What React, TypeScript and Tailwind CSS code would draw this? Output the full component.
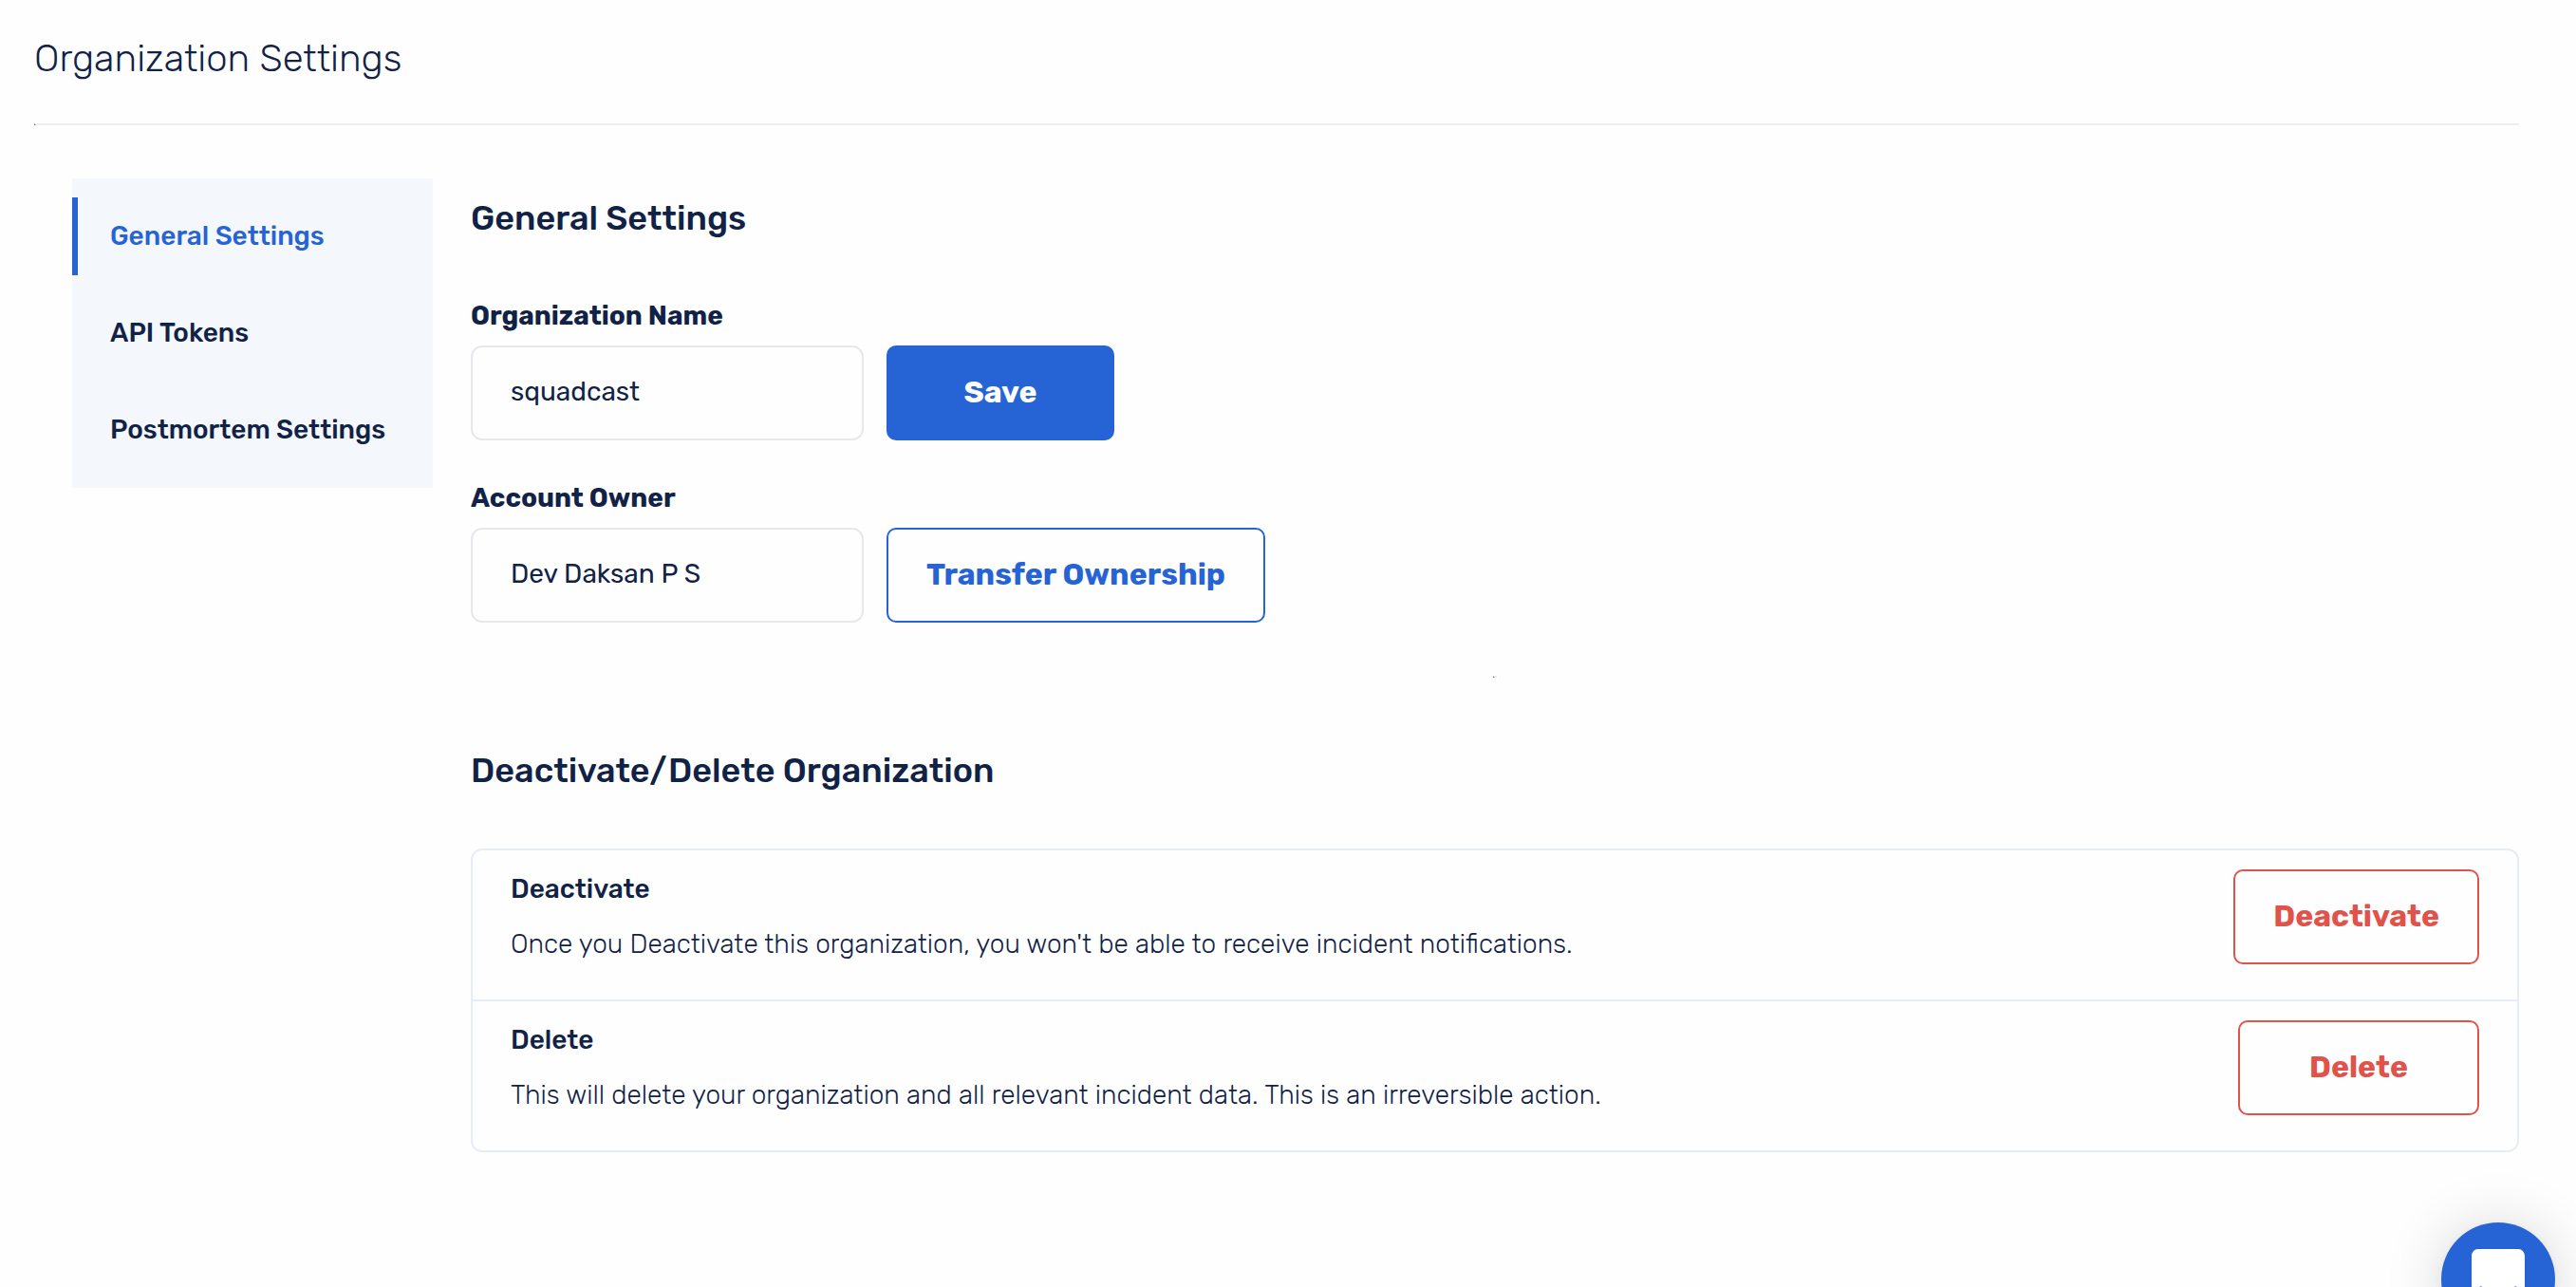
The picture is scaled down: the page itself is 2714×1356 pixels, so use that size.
import { useState } from "react";

const navItems = [
  { label: "General Settings", href: "#general", active: true },
  { label: "API Tokens", href: "#api-tokens", active: false },
  { label: "Postmortem Settings", href: "#postmortem", active: false },
];

const inputClass =
  "h-[100px] w-[414px] rounded-xl border-2 border-[#e7e8ec] bg-transparent px-10 pb-1 text-[28px] font-normal text-[#112247] outline-none";
const labelClass = "block text-[28px] leading-[34px] font-bold";
const buttonClass =
  "h-[100px] cursor-pointer rounded-[10px] border-2 px-10 pb-0.5 text-[32px] leading-10 font-bold whitespace-nowrap";

function SideNav() {
  return (
    <nav
      aria-label="Settings sections"
      className="flex w-[380px] shrink-0 flex-col gap-5 bg-[#f4f7fc] py-5"
    >
      {navItems.map((item) => (
        <a
          key={item.label}
          href={item.href}
          aria-current={item.active ? "page" : undefined}
          className={
            item.active
              ? "flex h-[82px] items-center border-l-6 border-[#2664d6] pl-[34px] text-[28px] leading-8 font-medium text-[#2664d6]"
              : "flex h-[82px] items-center border-l-6 border-transparent pl-[34px] text-[28px] leading-8 font-medium"
          }
        >
          {item.label}
        </a>
      ))}
    </nav>
  );
}

function GeneralForm() {
  const [name, setName] = useState("squadcast");
  const [owner, setOwner] = useState("Dev Daksan P S");
  return (
    <form className="mt-16 flex flex-col gap-11" onSubmit={(e) => e.preventDefault()}>
      <div>
        <label htmlFor="org-name" className={labelClass}>
          Organization Name
        </label>
        <div className="mt-3.5 flex gap-6">
          <input
            id="org-name"
            type="text"
            value={name}
            onChange={(e) => setName(e.target.value)}
            className={inputClass}
          />
          <button
            type="submit"
            className={`${buttonClass} min-w-60 border-[#2664d6] bg-[#2664d6] text-white`}
          >
            Save
          </button>
        </div>
      </div>
      <div>
        <label htmlFor="account-owner" className={labelClass}>
          Account Owner
        </label>
        <div className="mt-3.5 flex gap-6">
          <input
            id="account-owner"
            type="text"
            value={owner}
            onChange={(e) => setOwner(e.target.value)}
            className={inputClass}
          />
          <button
            type="button"
            className={`${buttonClass} min-w-60 border-[#2664d6] text-[#2664d6]`}
          >
            Transfer Ownership
          </button>
        </div>
      </div>
    </form>
  );
}

function DangerRow({ title, text }: { title: string; text: string }) {
  return (
    <div className="flex items-start justify-between gap-10 px-10 pt-5 pb-[37px]">
      <div>
        <h3 className="text-[28px] leading-[42px] font-medium">{title}</h3>
        <p className="mt-4 text-[28px] leading-[42px] font-light">{text}</p>
      </div>
      <button
        type="button"
        className={`${buttonClass} min-w-[254px] border-[#e0524a] text-[#e0524a]`}
      >
        {title}
      </button>
    </div>
  );
}

function ChatLauncher() {
  return (
    <button
      type="button"
      aria-label="Open chat"
      className="fixed right-[22px] -bottom-[52px] flex size-30 items-center justify-center rounded-full bg-[#2664d6] shadow-[0_2px_12px_rgba(0,0,0,0.06),0_4px_64px_rgba(0,0,0,0.16)]"
    >
      <svg viewBox="0 0 28 32" className="h-16 w-14" fill="white" aria-hidden="true">
        <path d="M28 32s-4.714-1.855-8.527-3.34H3.437C1.54 28.66 0 27.026 0 25.013V3.644C0 1.633 1.54 0 3.437 0h21.125c1.898 0 3.437 1.632 3.437 3.645v18.404H28V32zm-4.139-11.982a.88.88 0 00-1.292-.105c-.03.026-3.015 2.681-8.57 2.681-5.486 0-8.517-2.636-8.571-2.684a.88.88 0 00-1.29.107 1.01 1.01 0 00-.219.708.992.992 0 00.318.664c.142.128 3.537 3.15 9.762 3.15 6.226 0 9.621-3.022 9.763-3.15a.992.992 0 00.317-.664 1.01 1.01 0 00-.218-.707z" />
      </svg>
    </button>
  );
}

export default function App() {
  return (
    <div className="min-h-screen bg-[#fefefe] pr-15 pl-9 font-['Rubik','Inter',sans-serif] text-[#112247]">
      <header className="pt-[38px]">
        <h1 className="text-[40px] leading-12 font-light">Organization Settings</h1>
        <hr className="mt-11 h-0 border-0 border-t-2 border-l-2 border-t-[#eeeeee] border-l-[#888888]" />
      </header>
      <div className="flex items-start gap-10 pt-14 pl-10">
        <SideNav />
        <main className="min-w-0 flex-1 pt-5">
          <h2 className="text-[36px] leading-11 font-medium">General Settings</h2>
          <GeneralForm />
          <hr className="mx-auto mt-14 h-0 w-1 border-0 border-t-2 border-l-2 border-t-[#eeeeee] border-l-[#888888]" />
          <h2 className="mt-[76px] text-[36px] leading-11 font-medium">
            Deactivate/Delete Organization
          </h2>
          <section className="mt-15 divide-y-2 divide-[#e8ecf6] rounded-xl border-2 border-[#e8ecf6]">
            <DangerRow
              title="Deactivate"
              text="Once you Deactivate this organization, you won't be able to receive incident notifications."
            />
            <DangerRow
              title="Delete"
              text="This will delete your organization and all relevant incident data. This is an irreversible action."
            />
          </section>
        </main>
      </div>
      <ChatLauncher />
    </div>
  );
}
